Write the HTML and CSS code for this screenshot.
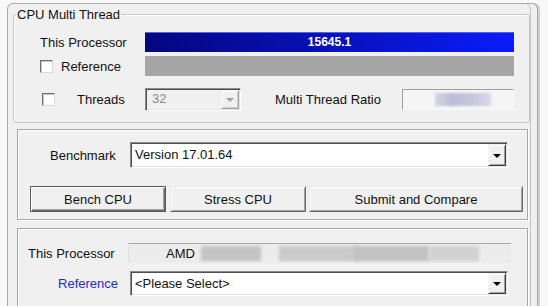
FILE: index.html
```html
<!DOCTYPE html>
<html lang="en">
<head>
    <meta charset="UTF-8">
    <title>CPU Benchmark</title>
    <link rel="stylesheet" href="styles.css">
</head>
<body>
    <div class="window">
        <fieldset class="group">
            <legend>CPU Multi Thread</legend>
            <div class="row bar-row">
                <span class="label proc">This Processor</span>
                <div class="bar blue">15645.1</div>
            </div>
            <div class="row bar-row second">
                <span class="check-wrap"><span class="checkbox"></span><span class="label">Reference</span></span>
                <div class="bar gray"></div>
            </div>
            <div class="row threads-row">
                <span class="checkbox threads-box"></span>
                <span class="label threads">Threads</span>
                <div class="combo disabled threads-combo">
                    <span class="value">32</span>
                    <span class="arrow"></span>
                </div>
                <span class="label ratio-label">Multi Thread Ratio</span>
                <div class="ratio"><span class="smudge"></span></div>
            </div>
        </fieldset>

        <div class="panel bench-panel">
            <div class="row bench-row">
                <span class="label bench-label">Benchmark</span>
                <div class="combo wide">
                    <span class="value">Version 17.01.64</span>
                    <span class="arrow"></span>
                </div>
            </div>
            <div class="row buttons">
                <button class="btn default">Bench CPU</button>
                <button class="btn">Stress CPU</button>
                <button class="btn submit">Submit and Compare</button>
            </div>
        </div>

        <div class="panel compare-panel">
            <div class="row proc-row">
                <span class="label cmp-label">This Processor</span>
                <div class="proc-box">
                    <span class="amd">AMD</span>
                    <span class="smudge s1"></span>
                    <span class="smudge s2"></span>
                    <span class="smudge s3"></span>
                    <span class="smudge s4"></span>
                </div>
            </div>
            <div class="row ref-row">
                <span class="label ref-label">Reference</span>
                <div class="combo wide">
                    <span class="value">&lt;Please Select&gt;</span>
                    <span class="arrow"></span>
                </div>
            </div>
        </div>
    </div>
</body>
</html>
```

FILE: styles.css
```css
body {
    margin: 0;
    background: #f8f8f8;
    font-family: "Liberation Sans", Arial, sans-serif;
    font-size: 13px;
    color: #111;
    overflow: hidden;
}
.window {
    margin: 3px 0 0 7px;
    width: 531px;
    height: 320px;
    box-sizing: border-box;
    background: #f0f0f0;
    border: 1px solid #a8a8a8;
    border-bottom: none;
    border-radius: 6px 6px 0 0;
    box-shadow: 2px 0 0 #d0d0d0, inset -6px 0 0 #f0f0f0, inset -7px 0 0 #c4c4c4;
    padding-top: 3px;
}
.row {
    display: flex;
    align-items: center;
}
.label {
    white-space: nowrap;
}

/* group box */
.group {
    margin: 0 0 0 5px;
    width: 517px;
    box-sizing: border-box;
    padding: 10px 15px 11px 0;
    border: 1px solid #c9c9c9;
    border-radius: 3px;
    box-shadow: inset 1px 1px 0 #fff;
    min-width: 0;
}
.group legend {
    margin-left: 2px;
    padding: 0 1px;
    line-height: 15px;
}
.bar-row {
    height: 20px;
}
.bar-row.second {
    margin-top: 4px;
}
.proc {
    width: 105px;
    padding-left: 26px;
}
.check-wrap {
    width: 105px;
    padding-left: 26px;
    display: flex;
    align-items: center;
}
.checkbox {
    width: 11px;
    height: 11px;
    background: #fff;
    border: 1px solid;
    border-color: #6f6f6f #dcdcdc #dcdcdc #6f6f6f;
    box-shadow: inset 1px 1px 0 #c8c8c8;
    margin-right: 8px;
    flex: none;
}
.bar {
    flex: 1;
    height: 20px;
}
.bar.blue {
    background: linear-gradient(to right, #06067e, #0a1cf8);
    color: #fff;
    font-weight: bold;
    font-size: 12px;
    display: flex;
    align-items: center;
    justify-content: center;
    box-shadow: inset 0 1px 0 #5060ff;
}
.bar.gray {
    background: #a6a6a6;
}
.threads-row {
    margin-top: 11px;
    height: 24px;
}
.threads-box {
    margin-left: 28px;
    margin-right: 22px;
}
.threads {
    width: 68px;
}
.combo {
    display: flex;
    align-items: stretch;
    box-sizing: border-box;
    background: #fff;
    border: 1px solid;
    border-color: #8a8a8a #fff #fff #8a8a8a;
    box-shadow: inset 1px 1px 0 #505050, inset -1px -1px 0 #e3e3e3;
    padding: 1px 2px 2px 2px;
}
.combo .value {
    flex: 1;
    display: flex;
    align-items: center;
    padding-left: 2px;
}
.combo .arrow {
    width: 18px;
    box-sizing: border-box;
    background: #f0f0f0;
    border: 1px solid;
    border-color: #f0f0f0 #404040 #404040 #f0f0f0;
    box-shadow: inset 1px 1px 0 #fff, inset -1px -1px 0 #a0a0a0;
    display: flex;
    align-items: center;
    justify-content: center;
    margin: 0 -1px -1px 0;
}
.combo .arrow::after {
    content: "";
    border-left: 4px solid transparent;
    border-right: 4px solid transparent;
    border-top: 4px solid #000;
    margin-top: 1px;
}
.combo.disabled {
    background: #f0f0f0;
    color: #8a8a8a;
}
.combo.disabled .arrow {
    border-color: #f0f0f0 #a0a0a0 #a0a0a0 #f0f0f0;
    box-shadow: inset 1px 1px 0 #fff, inset -1px -1px 0 #d0d0d0;
}
.combo.disabled .arrow::after {
    border-top-color: #a0a0a0;
}
.threads-combo {
    width: 96px;
    height: 23px;
}
.threads-combo .value {
    padding-left: 4px;
}
.ratio-label {
    margin-left: 34px;
}
.ratio {
    margin-left: auto;
    width: 112px;
    height: 21px;
    box-sizing: border-box;
    background: #f5f5f5;
    border: 1px solid;
    border-color: #a0a0a0 #f8f8f8 #f8f8f8 #a0a0a0;
    position: relative;
}
.ratio .smudge {
    position: absolute;
    left: 32px;
    top: 3px;
    width: 56px;
    height: 13px;
    background: linear-gradient(to right, #d6d6e6, #bcbcd8 30%, #c4c4dc 60%, #d8d8e8);
    filter: blur(1px);
}

/* etched panels */
.panel {
    margin-left: 9px;
    width: 511px;
    box-sizing: border-box;
    border: 1px solid #a9a9a9;
    box-shadow: inset 1px 1px 0 #fff, 1px 1px 0 #fff;
}
.bench-panel {
    margin-top: 6px;
    padding: 12px 0 7px 0;
}
.bench-label {
    width: 70px;
    padding-left: 32px;
    margin-right: 10px;
}
.combo.wide {
    width: 378px;
    height: 26px;
}
.buttons {
    margin-top: 18px;
    padding-left: 12px;
    gap: 4px;
}
.btn {
    font: inherit;
    color: #111;
    height: 26px;
    width: 136px;
    background: #f0f0f0;
    border: 1px solid;
    border-color: #e8e8e8 #6a6a6a #6a6a6a #e8e8e8;
    box-shadow: inset 1px 1px 0 #fff, inset -1px -1px 0 #a0a0a0;
    padding: 0;
}
.btn.default {
    border-color: #5a5a5a;
    box-shadow: inset 1px 1px 0 #fff, inset -1px -1px 0 #6a6a6a, inset -2px -2px 0 #a0a0a0;
}
.btn.submit {
    width: 214px;
    margin-left: -1px;
}
.compare-panel {
    margin-top: 8px;
    padding: 14px 0 10px 0;
}
.cmp-label {
    width: 100px;
    padding-left: 10px;
}
.proc-box {
    width: 383px;
    height: 20px;
    box-sizing: border-box;
    background: #ececec;
    border-top: 1px solid #a8a8a8;
    border-left: 1px solid #e0e0e0;
    position: relative;
    display: flex;
    align-items: center;
}
.amd {
    margin-left: 37px;
}
.proc-box .smudge {
    position: absolute;
    top: 2px;
    height: 15px;
    filter: blur(1.5px);
}
.s1 { left: 72px; width: 60px; background: #c4c4c4; }
.s2 { left: 150px; width: 80px; background: #cacaca; top: 4px; height: 12px; }
.s3 { left: 225px; width: 75px; background: #c2c2c2; }
.s4 { left: 300px; width: 50px; background: #d2d2d2; top: 6px; }
.ref-row {
    margin-top: 8px;
}
.ref-label {
    width: 100px;
    text-align: right;
    padding-right: 12px;
    color: #2828c8;
}
.ref-row .combo.wide {
    height: 25px;
}
```
